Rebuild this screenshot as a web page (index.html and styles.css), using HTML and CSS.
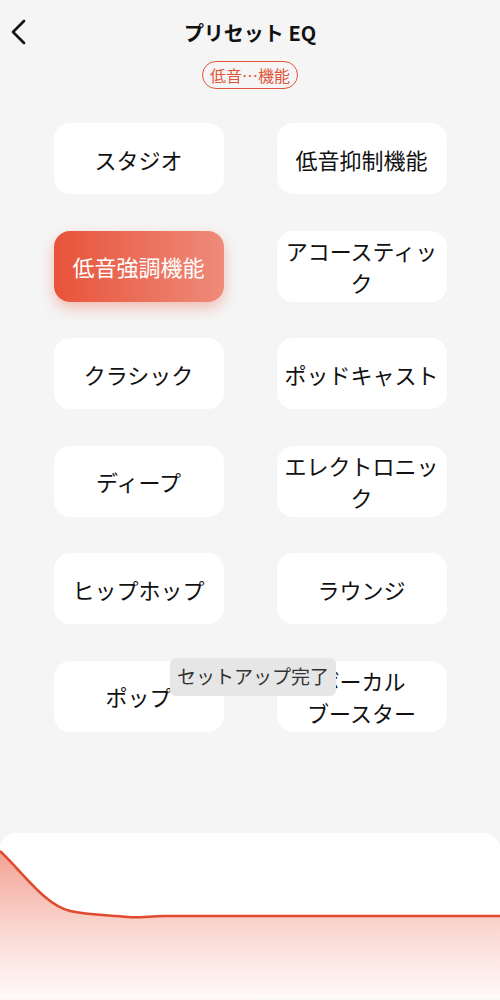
FILE: index.html
```html
<!DOCTYPE html>
<html lang="ja">
<head>
  <meta charset="UTF-8" />
  <title>プリセット EQ</title>
  <link rel="stylesheet" href="styles.css">
</head>
<body>
  <div class="page">

    <div class="header">
      <button class="back" aria-label="戻る">
        <svg width="20" height="28" viewBox="0 0 20 28">
          <path d="M15 3 L4 14 L15 25" fill="none" stroke="#111" stroke-width="2.6" stroke-linecap="round" stroke-linejoin="round" />
        </svg>
      </button>
      <h1>プリセット EQ</h1>
    </div>

    <div class="badge-row">
      <span class="badge">低音…機能</span>
    </div>

    <div class="presets">
      <button class="preset">スタジオ</button>
      <button class="preset">低音抑制機能</button>
      <button class="preset active">低音強調機能</button>
      <button class="preset">アコースティック</button>
      <button class="preset">クラシック</button>
      <button class="preset">ポッドキャスト</button>
      <button class="preset">ディープ</button>
      <button class="preset">エレクトロニック</button>
      <button class="preset">ヒップホップ</button>
      <button class="preset">ラウンジ</button>
      <button class="preset">ポップ</button>
      <button class="preset">ボーカル<br>ブースター</button>
    </div>

    <div class="toast">セットアップ完了</div>

    <div class="curve-card">
      <svg class="curve" width="500" height="166" viewBox="0 0 500 166">
        <defs>
          <linearGradient id="fillGrad" x1="0" y1="0" x2="0" y2="1">
            <stop offset="0" stop-color="#e8553a" stop-opacity="0.55" />
            <stop offset="0.55" stop-color="#e8553a" stop-opacity="0.22" />
            <stop offset="1" stop-color="#e8553a" stop-opacity="0.03" />
          </linearGradient>
        </defs>
        <path d="M0 18 C 25 42, 45 72, 70 78 C 88 82, 108 82, 128 84 C 140 85, 150 83, 165 83 L 500 83 L 500 166 L 0 166 Z" fill="url(#fillGrad)" />
        <path d="M0 18 C 25 42, 45 72, 70 78 C 88 82, 108 82, 128 84 C 140 85, 150 83, 165 83 L 500 83" fill="none" stroke="#e04a2e" stroke-width="2.6" />
      </svg>
    </div>

  </div>
</body>
</html>
```

FILE: styles.css
```css
body {
  margin: 0;
  background: #f5f5f5;
  font-family: "Noto Sans CJK JP", "Noto Sans", sans-serif;
  color: #111;
}
.page {
  position: relative;
  height: 1000px;
  overflow: hidden;
}
.header {
  position: relative;
  height: 44px;
  padding-top: 10px;
  display: flex;
  align-items: center;
  justify-content: center;
}
.header h1 {
  margin: 0;
  font-size: 20px;
  font-weight: bold;
}
.back {
  position: absolute;
  left: 9px;
  top: 18px;
  padding: 0;
  border: none;
  background: none;
}
.badge-row {
  display: flex;
  justify-content: center;
  margin-top: 7px;
}
.badge {
  display: inline-block;
  height: 26px;
  line-height: 26px;
  padding: 0 7px;
  border: 1.5px solid #e0553a;
  border-radius: 15px;
  color: #e0553a;
  font-size: 16px;
}
.presets {
  display: grid;
  grid-template-columns: 170px 170px;
  grid-auto-rows: 71px;
  column-gap: 53px;
  row-gap: 36.6px;
  justify-content: center;
  margin-top: 34px;
}
.preset {
  padding: 0 2px;
  border: none;
  border-radius: 16px;
  background: #fff;
  font-family: inherit;
  font-size: 22px;
  line-height: 32px;
  color: #111;
}
.preset.active {
  background: linear-gradient(90deg, #e8533a, #ee8b7a);
  color: #fff;
  box-shadow: 0 6px 14px rgba(232, 85, 58, 0.35);
}
.toast {
  position: absolute;
  left: 170px;
  top: 658px;
  width: 166px;
  height: 38px;
  line-height: 36px;
  text-align: center;
  background: #e6e6e6;
  border-radius: 6px;
  color: #333;
  font-size: 19px;
}
.curve-card {
  margin-top: 101px;
  height: 166px;
  background: #fff;
  border-radius: 16px 16px 0 0;
  overflow: hidden;
}
.curve {
  display: block;
}
```
